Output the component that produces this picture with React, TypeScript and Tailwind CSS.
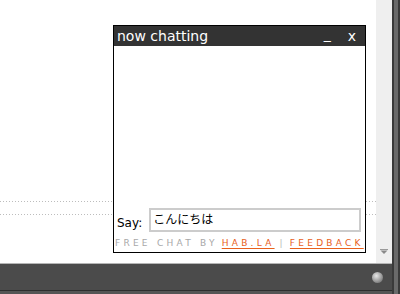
import React from "react";

export default function App() {
  const dotted =
    "h-px w-full bg-[linear-gradient(to_right,#bdbdbd_1px,transparent_1px)] bg-[length:3px_1px]";
  return (
    <div className="flex h-[294px] w-[400px] overflow-hidden bg-white font-['DejaVu_Sans',sans-serif]">
      <div className="flex flex-1 flex-col">
        <div className="flex flex-1">
          <div className="relative flex-1 bg-white">
            <div className="pt-[201px]">
              <div className={dotted} />
              <div className="h-[12px]" />
              <div className={dotted} />
            </div>
            {/* chat window */}
            <div className="absolute left-[113px] top-[25px] flex h-[228px] w-[253px] flex-col border border-black bg-white">
              <div className="flex h-[20px] items-center justify-between bg-[#333333] pl-[3px] pr-[9px] text-[14px] leading-none text-white">
                <span className="-mt-[1px]">now chatting</span>
                <div className="flex gap-[17px] text-[14px]">
                  <span className="-mt-[3px]">_</span>
                  <span className="-mt-[1px]">x</span>
                </div>
              </div>
              <div className="flex-1" />
              <div className="flex items-center pl-[3px] pr-[4px]">
                <span className="mt-[6px] text-[12px] text-black">Say:</span>
                <div className="ml-[7px] flex h-[24px] flex-1 items-center border-2 border-[#cccccc] px-[2px] text-[12px] text-black font-['DejaVu_Sans','Noto_Sans_CJK_JP',sans-serif]">
                  こんにちは
                </div>
              </div>
              <div className="mt-[7px] mb-[4px] flex items-end pl-[1px] text-[9px] leading-none tracking-[3.25px] whitespace-nowrap">
                <span className="text-[#a8a8a8]">FREE CHAT BY</span>
                <span className="ml-[4px] text-[#e8601c] underline underline-offset-[2px]">HAB.LA</span>
                <span className="ml-[5px] text-[#b8b8b8]">|</span>
                <span className="ml-[4px] text-[#e8601c] underline underline-offset-[2px]">FEEDBACK</span>
              </div>
            </div>
          </div>
          {/* scrollbar */}
          <div className="flex w-[16px] flex-col justify-end bg-[#efefef] pb-[8px]">
            <svg width="16" height="6" viewBox="0 0 16 6">
              <rect x="4" y="0" width="8" height="1" fill="#9a9a9a" />
              <polygon points="4.5,1.5 11.5,1.5 8,5" fill="#8a8a8a" />
            </svg>
          </div>
        </div>
        {/* bottom bar */}
        <div className="flex h-[31px] flex-col">
          <div className="h-px bg-[#b5b5b5]" />
          <div className="flex h-[26px] items-center justify-end bg-[#4b4b4b] pr-[9px]">
            <div className="h-[11px] w-[11px] rounded-full bg-[radial-gradient(circle_at_40%_35%,#e8e8e8,#9a9a9a_55%,#5a5a5a)]" />
          </div>
          <div className="h-px bg-[#2e2e2e]" />
          <div className="flex-1 bg-[#555555]" />
        </div>
      </div>
      {/* right edge */}
      <div className="flex w-[8px]">
        <div className="w-[2px] bg-[#3a3a3a]" />
        <div className="w-[4px] bg-[#6a6a6a]" />
        <div className="w-[2px] bg-[#3a3a3a]" />
      </div>
    </div>
  );
}
